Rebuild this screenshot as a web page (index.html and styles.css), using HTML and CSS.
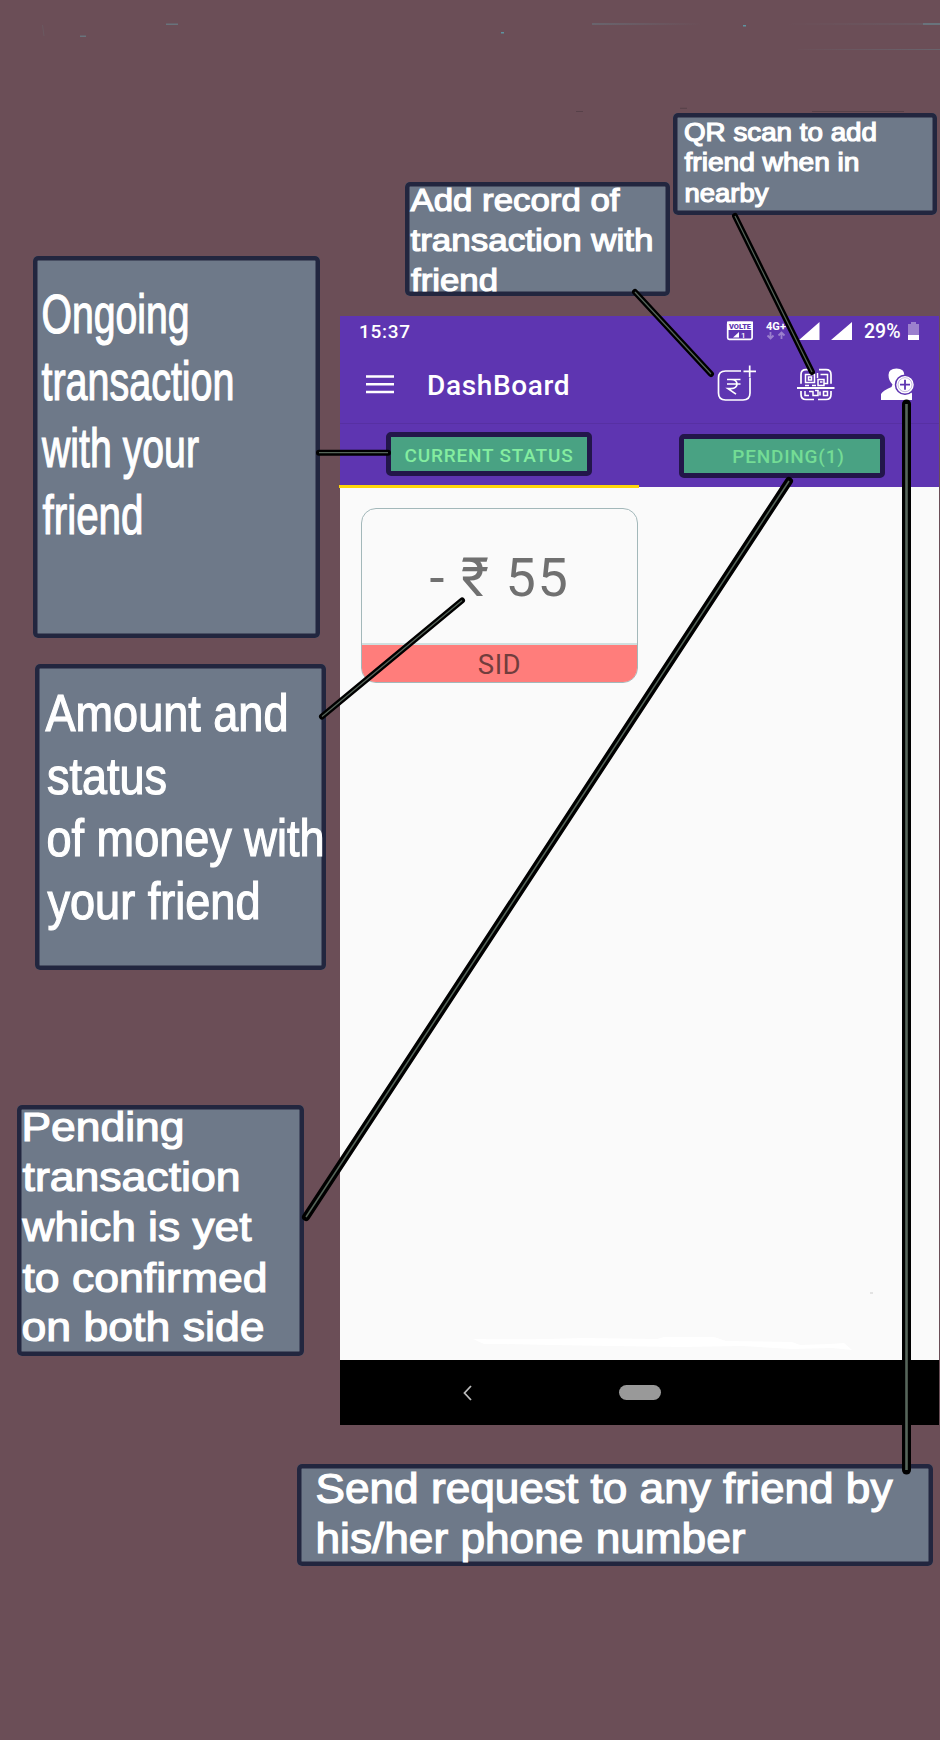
FILE: index.html
```html
<!DOCTYPE html>
<html lang="en">
<head>
<meta charset="utf-8">
<title>DashBoard guide</title>
<link rel="stylesheet" href="styles.css">
</head>
<body>
<main class="poster">
  <section class="phone">
    <header class="appbar">
      <div class="status">
        <span class="clock">15:37</span>
        <svg class="status-icons" viewBox="720 316 132 34">
          <rect x="727.7" y="322.3" width="24.4" height="17" rx="1.5" class="ln"/>
          <path d="M727 321.500h26v8.500h-26z" fill="#fff"/>
          <text x="729" y="328.800" class="volte" textLength="22" lengthAdjust="spacingAndGlyphs">VOLTE</text>
          <path d="M733 337.500h6v-5.500z" fill="#fff"/>
          <text x="741" y="338" class="tiny">1</text>
          <text x="766" y="330" class="net" textLength="20" lengthAdjust="spacingAndGlyphs">4G+</text>
          <path d="M770.500 332v6m-3-2.500 3 3 3-3M781.500 339v-6m-3 2.500 3-3 3 3" class="dim"/>
          <path d="M799 340h20.500v-18zM831 340h21v-18z" fill="#fff"/>
        </svg>
        <span class="percent">29%</span>
        <svg class="battery" viewBox="0 0 12 18"><path d="M3 0h5v2h3v16H0V2h3z" fill="#9b80cd"/><path d="M0 13h11v5H0z" fill="#fff"/></svg>
      </div>
      <div class="toolbar">
        <svg class="menu" viewBox="0 0 28 19"><path d="M0 1.500h28M0 9.200h28M0 17h28"/></svg>
        <h1>DashBoard</h1>
        <svg class="actions" viewBox="710 362 210 45">
          <g class="ln">
            <path d="M741 371h-15.500q-7 0-7 7v15q0 7 7 7h17.500q7 0 7-7v-15.500"/>
            <path d="M743.500 371.300h12.500M749.700 365.500v11.500"/>
            <path d="M727 379.500h13.500M727 384h13.500M727 379.500h4q6 .3 6 4.500t-6 4.600h-3l8 5.500"/>
            <path d="M813 369.700h-7q-5 0-5 5v9M819 369.700h7q5 0 5 5v9M801 391v3.500q0 5 5 5h8M831 391v3.500q0 5-5 5h-8"/>
          </g>
          <path d="M797 388h37.500" stroke="#fff" stroke-width="2"/>
          <g class="qr">
            <path d="M805.500 374.500h9v8h-9zM808.500 377h3v3h-3zM817.500 373v5M820.500 374.500h7v9h-3M818 379.500h6v6h-6zM820 382h2.500M805 385.500h4M812 385.500h4M805 391v4.500h4M809 391.500h4v4h5v-5h-3M820 395.500v-4M823.500 391.500h4v4h-4z"/>
          </g>
          <path d="M881 400v-6q2-3.500 10.500-7l1-2.500q-4-4-4-9.500 0-6.500 8-6.500t8 7l1 8 6.500 10v6.500z" fill="#fff"/>
          <circle cx="905" cy="384.700" r="9.500" fill="#fff" stroke="#5e35b1" stroke-width="1.500"/>
          <path d="M900 384.700h10M905 379.700v10" stroke="#5e35b1" stroke-width="1.800"/>
          <circle cx="905" cy="384.700" r="7" fill="none" stroke="#5e35b1" stroke-width="1" opacity=".35"/>
        </svg>
      </div>
      <nav class="tabs">
        <div class="tab active">CURRENT STATUS</div>
        <div class="tab pending">PENDING(1)</div>
      </nav>
    </header>
    <div class="content">
      <article class="card">
        <div class="amount">- ₹ 55</div>
        <div class="name">SID</div>
      </article>
    </div>
    <footer class="navbar">
      <svg class="back" viewBox="0 0 9 16"><path d="M8 1 1.500 8 8 15"/></svg>
      <span class="home"></span>
    </footer>
  </section>

  <aside class="note ongoing"><svg viewBox="33 256 287 382">
    <text x="41.500" y="333" textLength="148" lengthAdjust="spacingAndGlyphs">Ongoing</text>
    <text x="41.500" y="400" textLength="193" lengthAdjust="spacingAndGlyphs">transaction</text>
    <text x="42" y="467" textLength="157" lengthAdjust="spacingAndGlyphs">with your</text>
    <text x="42.500" y="534" textLength="101" lengthAdjust="spacingAndGlyphs">friend</text>
  </svg></aside>
  <aside class="note money"><svg viewBox="35 664 291 306">
    <text x="45.500" y="731" textLength="243" lengthAdjust="spacingAndGlyphs">Amount and</text>
    <text x="47" y="793.500" textLength="120" lengthAdjust="spacingAndGlyphs">status</text>
    <text x="46.500" y="856" textLength="278" lengthAdjust="spacingAndGlyphs">of money with</text>
    <text x="47.500" y="918.500" textLength="213" lengthAdjust="spacingAndGlyphs">your friend</text>
  </svg></aside>
  <aside class="note confirm"><svg viewBox="17 1105 287 251">
    <text x="21.500" y="1141" textLength="163" lengthAdjust="spacingAndGlyphs">Pending</text>
    <text x="22.500" y="1191.300" textLength="218" lengthAdjust="spacingAndGlyphs">transaction</text>
    <text x="22.500" y="1241.300" textLength="229" lengthAdjust="spacingAndGlyphs">which is yet</text>
    <text x="22.500" y="1291.500" textLength="245" lengthAdjust="spacingAndGlyphs">to confirmed</text>
    <text x="21.500" y="1341.300" textLength="243" lengthAdjust="spacingAndGlyphs">on both side</text>
  </svg></aside>
  <aside class="note record"><svg viewBox="405 182 265 114">
    <text x="410.500" y="210.700" textLength="209" lengthAdjust="spacingAndGlyphs">Add record of</text>
    <text x="410.500" y="251" textLength="243" lengthAdjust="spacingAndGlyphs">transaction with</text>
    <text x="411" y="290.500" textLength="87" lengthAdjust="spacingAndGlyphs">friend</text>
  </svg></aside>
  <aside class="note scan"><svg viewBox="673 113 264 102">
    <text x="684" y="140.500" textLength="193" lengthAdjust="spacingAndGlyphs">QR scan to add</text>
    <text x="684.500" y="171" textLength="175" lengthAdjust="spacingAndGlyphs">friend when in</text>
    <text x="684.500" y="202" textLength="84" lengthAdjust="spacingAndGlyphs">nearby</text>
  </svg></aside>
  <aside class="note send"><svg viewBox="297 1464 636 102">
    <text x="315.500" y="1503" textLength="577" lengthAdjust="spacingAndGlyphs">Send request to any friend by</text>
    <text x="315.500" y="1553" textLength="430" lengthAdjust="spacingAndGlyphs">his/her phone number</text>
  </svg></aside>

  <svg class="links" viewBox="0 0 940 1740">
    <defs>
      <linearGradient id="fade"><stop offset="0" stop-color="#69646d"/><stop offset="1" stop-color="#69646d" stop-opacity="0"/></linearGradient>
      <linearGradient id="rise"><stop offset="0" stop-color="#69646d" stop-opacity="0"/><stop offset="1" stop-color="#69646d"/></linearGradient>
    </defs>
    <path d="M592 23h110v2H592z" fill="url(#fade)"/>
    <path d="M785 23.500h140v1H785zM798 49h142v1H798z" fill="url(#rise)"/>
    <path d="M923 23h17v2h-17zM166 23.500h12v1.500h-12zM80 35.500h6v1.500h-6z" fill="#69737c"/>
    <path d="M501 32h3v1.500h-3zM743 25h3v1.500h-3z" fill="#5e93a0"/>
    <path d="M42.500 25 44 36" stroke="#6a5961" fill="none"/>
    <path d="M812 111.500h92M576 111.500h7M680 108.300h7" stroke="#574149" fill="none"/>
    <path d="M473 1339q60 1 110-1l74 1 7-2h50l12 4 66 1 8 3 30-1 14-1 8 7-20-2-40 1-50-3-60 1-70-1-60-1-50-1-18 0z" fill="#fff"/>
    <path d="M870 1293h3" stroke="#ccc"/>
    <g class="outer">
      <path d="M319 452.700h69M635 292l76 82M735 216l77 156M462 600.500 322 716.500"/>
      <path d="M789 481 306 1217" stroke-width="8"/>
      <path d="M906.500 404v1066" class="thick"/>
    </g>
    <g class="inner">
      <path d="M319 452.700h69M635 292l76 82M735 216l77 156M462 600.500 322 716.500"/>
      <path d="M789 481 306 1217" stroke-width="1.500"/>
      <path d="M906.500 404v1066" class="core"/>
    </g>
  </svg>
</main>
</body>
</html>
```
FILE: styles.css
```css
* { box-sizing: border-box; }
body { margin: 0; background: #6b4e57; }
.poster { position: relative; width: 940px; height: 1740px; overflow: hidden; padding: 316px 0 0 340px; background: #6b4e57; }
.phone { width: 599px; height: 1109px; display: flex; flex-direction: column; font-family: Roboto, sans-serif; background: #fafafa; }
.appbar { height: 171px; background: #5e35b1; color: #fff; }
.status { height: 33px; display: flex; align-items: center; padding-left: 19px; }
.clock { width: 361px; font-size: 19px; font-weight: 500; letter-spacing: .7px; line-height: 20px; padding-bottom: 1px; }
.status-icons { width: 132px; height: 34px; flex: none; }
.percent { margin-left: 12px; width: 44px; font-size: 19.500px; font-weight: 500; line-height: 20px; padding-bottom: 1px; }
.battery { width: 12px; height: 18px; margin-bottom: 3px; }
.volte { font: 900 7px Roboto, sans-serif; fill: #5e35b1; }
.tiny { font: 500 8px Roboto, sans-serif; fill: #fff; }
.net { font: 700 11px Roboto, sans-serif; fill: #fff; }
.dim { fill: none; stroke: #9b80cd; stroke-width: 1.800; }
.ln { fill: none; stroke: #fff; stroke-width: 1.700; }
.qr { fill: none; stroke: #fff; stroke-width: 1.500; }
.toolbar { height: 75px; display: flex; align-items: center; padding: 0 0 3px 26px; border-bottom: 1px solid #5730a3; }
.menu { width: 28px; height: 19px; fill: none; stroke: #fff; stroke-width: 2.600; }
h1 { margin: 0 0 0 33px; width: 283px; font-size: 28px; font-weight: 500; line-height: 36px; letter-spacing: .65px; padding-top: 2px; }
.actions { width: 210px; height: 45px; flex: none; }
.tabs { height: 63px; display: grid; grid-template-columns: 300px 299px; padding-top: 8px; }
.tab { width: 206px; height: 44px; margin-left: 46px; border: 5px solid #23164a; border-radius: 5px; background: #49a283; color: #84eda0; display: flex; align-items: center; justify-content: center; font-size: 19px; font-weight: 500; letter-spacing: .8px; padding-top: 3px; }
.pending { margin-left: 39px; margin-top: 2px; padding-left: 13px; padding-top: 0; color: #74dc95; }
.content { flex: 1; padding: 21px 21px; position: relative; }
.content::before { content: ""; position: absolute; left: -1px; top: -2px; width: 300px; height: 3px; background: #ffd60a; }
.card { width: 277px; height: 175px; border: 1.500px solid #a3b8ba; border-radius: 15px; overflow: hidden; display: flex; flex-direction: column; }
.amount { height: 136px; display: flex; align-items: center; justify-content: center; font-size: 54px; letter-spacing: 1.600px; color: #707070; border-bottom: 2px solid #d0dfdf; padding-top: 2px; }
.name { flex: 1; display: flex; align-items: center; justify-content: center; background: #ff7d7b; color: #713d3d; font-size: 27.500px; letter-spacing: .5px; padding-top: 2px; }
.navbar { height: 65px; background: #000; display: flex; align-items: center; padding-left: 123px; }
.back { width: 9px; height: 16px; fill: none; stroke: #bbb; stroke-width: 1.800; }
.home { width: 42px; height: 15px; margin-left: 147px; border-radius: 8px; background: #999; }
.note { position: absolute; border-radius: 5px; background: #6e7989; box-shadow: inset 0 0 0 4.500px #22263f; }
.note svg { display: block; width: 100%; height: 100%; overflow: visible; }
.note text { font-family: "Liberation Sans", Arial, sans-serif; fill: #fff; stroke: #fff; stroke-width: 1.200px; }
.ongoing { left: 33px; top: 256px; width: 287px; height: 382px; }
.ongoing text { font-size: 55px; }
.money { left: 35px; top: 664px; width: 291px; height: 306px; }
.money text { font-size: 52px; }
.confirm { left: 17px; top: 1105px; width: 287px; height: 251px; }
.confirm text { font-size: 41.500px; }
.record { left: 405px; top: 182px; width: 265px; height: 114px; }
.record text { font-size: 32px; }
.scan { left: 673px; top: 113px; width: 264px; height: 102px; }
.scan text { font-size: 25.500px; }
.send { left: 297px; top: 1464px; width: 636px; height: 102px; }
.send text { font-size: 42px; }
.links { position: absolute; inset: 0; width: 940px; height: 1740px; }
.outer { fill: none; stroke: #000; stroke-width: 6; stroke-linecap: round; }
.inner { fill: none; stroke: #56655a; stroke-width: 1.200; }
.thick { stroke-width: 9; }
.core { stroke-width: 2.600; }
```
